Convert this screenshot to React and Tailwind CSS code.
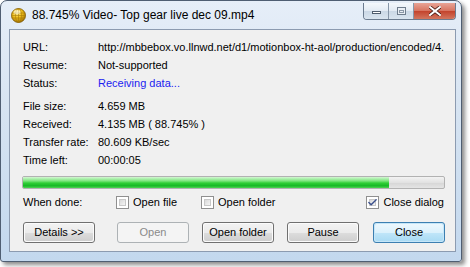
import { Check } from 'lucide-react'

const font = { fontFamily: '"Liberation Sans", Arial, sans-serif' }

function GlobeIcon() {
    return (
        <svg width="15" height="15" viewBox="0 0 15 15">
            <defs>
                <radialGradient id="gl" cx="0.4" cy="0.3" r="0.75">
                    <stop offset="0" stopColor="#fff6b0" />
                    <stop offset="0.45" stopColor="#f2c21b" />
                    <stop offset="1" stopColor="#9a6a00" />
                </radialGradient>
            </defs>
            <circle cx="7.5" cy="7.5" r="7" fill="url(#gl)" stroke="#7a5600" strokeWidth="0.8" />
            <ellipse cx="7.5" cy="7.5" rx="3" ry="7" fill="none" stroke="#a87a06" strokeWidth="0.6" />
            <line x1="7.5" y1="0.5" x2="7.5" y2="14.5" stroke="#a87a06" strokeWidth="0.6" />
            <line x1="0.8" y1="5" x2="14.2" y2="5" stroke="#a87a06" strokeWidth="0.6" />
            <line x1="0.5" y1="7.5" x2="14.5" y2="7.5" stroke="#a87a06" strokeWidth="0.6" />
            <line x1="0.8" y1="10" x2="14.2" y2="10" stroke="#a87a06" strokeWidth="0.6" />
            <ellipse cx="6" cy="4" rx="3.5" ry="2" fill="#fffbe0" opacity="0.55" />
        </svg>
    )
}

function CaptionButtons() {
    return (
        <div className="flex h-[17px] rounded-b-[4px] border border-t-0 border-[#6b7b8f] overflow-hidden">
            <div className="w-[25px] flex items-center justify-center border-r border-[#8796a8] bg-[linear-gradient(to_bottom,#f4f8fc_0%,#e2eaf3_50%,#cbd8e6_51%,#d9e4ef_100%)]">
                <div className="w-[9px] h-[3px] mt-[3px] border border-[#4f5d6e] bg-white"></div>
            </div>
            <div className="w-[25px] flex items-center justify-center border-r border-[#8796a8] bg-[linear-gradient(to_bottom,#f4f8fc_0%,#e2eaf3_50%,#cbd8e6_51%,#d9e4ef_100%)]">
                <div className="w-[9px] h-[8px] border border-[#6f7d8d] bg-[#e9eef4] flex items-center justify-center">
                    <div className="w-[5px] h-[3px] border border-[#8a97a6]"></div>
                </div>
            </div>
            <div className="w-[41px] flex items-center justify-center bg-[linear-gradient(to_bottom,#e8a496_0%,#d7735f_50%,#c3432c_51%,#d2765e_100%)]">
                <svg width="12" height="10" viewBox="0 0 12 10">
                    <path d="M1 1 L11 9 M11 1 L1 9" stroke="#4a1e16" strokeWidth="3.6" strokeLinecap="square" />
                    <path d="M1 1 L11 9 M11 1 L1 9" stroke="#ffffff" strokeWidth="2" strokeLinecap="square" />
                </svg>
            </div>
        </div>
    )
}

function Checkbox({ checked, label }) {
    return (
        <div className="flex items-center gap-[4px]">
            <div className="w-[13px] h-[13px] border border-[#8f8f8f] bg-white p-[2px]">
                <div className="w-full h-full bg-[linear-gradient(135deg,#d9d9d9,#f4f4f4)] border border-[#c8c8c8] relative">
                    {checked && (
                        <Check size={11} strokeWidth={3} className="absolute -left-[3px] -top-[3px] text-[#3b4f8c]" />
                    )}
                </div>
            </div>
            <span>{label}</span>
        </div>
    )
}

function Button({ children, variant }) {
    if (variant === 'disabled') {
        return (
            <div className="h-[21px] w-[72px] rounded-[3px] border border-[#adb2b5] bg-[#f4f4f4] text-[#8a8a8a] flex items-center justify-center">
                {children}
            </div>
        )
    }
    if (variant === 'default') {
        return (
            <div className="h-[21px] w-[72px] rounded-[3px] border border-[#3c7fb1] p-[1px] bg-[#c5e6f8]">
                <div className="h-full w-full rounded-[2px] flex items-center justify-center bg-[linear-gradient(to_bottom,#ecf7fd_0%,#dbf1fc_50%,#c0e6f9_51%,#aadbf4_100%)]">
                    {children}
                </div>
            </div>
        )
    }
    return (
        <div className="h-[21px] w-[72px] rounded-[3px] border border-[#707070] p-[1px] bg-[#fbfbfb]">
            <div className="h-full w-full rounded-[2px] flex items-center justify-center bg-[linear-gradient(to_bottom,#f2f2f2_0%,#ebebeb_50%,#dddddd_51%,#cfcfcf_100%)]">
                {children}
            </div>
        </div>
    )
}

export default function App() {
    const info = [
        { label: 'URL:', value: 'http://mbbebox.vo.llnwd.net/d1/motionbox-ht-aol/production/encoded/4.' },
        { label: 'Resume:', value: 'Not-supported' },
        { label: 'Status:', value: 'Receiving data...', blue: true },
    ]
    const stats = [
        { label: 'File size:', value: '4.659 MB' },
        { label: 'Received:', value: '4.135 MB ( 88.745% )' },
        { label: 'Transfer rate:', value: '80.609 KB/sec' },
        { label: 'Time left:', value: '00:00:05' },
    ]

    return (
        <div className="w-[470px] h-[267px] bg-white" style={font}>
            <div className="w-[462px] h-[262px] rounded-t-[7px] rounded-b-[3px] border border-[#4f5e72] flex flex-col bg-[linear-gradient(to_bottom,#e6eef8,#d7e4f2_40%,#c3d8ee)] shadow-[3px_3px_4px_rgba(0,0,0,0.45)]">
                <div className="h-[28px] flex items-start shrink-0">
                    <div className="ml-[10px] mt-[7px]">
                        <GlobeIcon />
                    </div>
                    <span className="ml-[6px] mt-[6px] text-[12px] text-black leading-[16px]">
                        88.745% Video- Top gear live dec 09.mp4
                    </span>
                    <div className="flex-1"></div>
                    <div className="mr-[5px] mt-[2px]">
                        <CaptionButtons />
                    </div>
                </div>

                <div className="ml-[8px] mr-[5px] mb-[9px] flex-1 border border-[#8c9bb0] bg-[#f0f0f0] pt-[8px] pl-[12px] pr-[10px] text-[11px] text-black">
                    <div className="flex flex-col">
                        {info.map((row) => (
                            <div key={row.label} className="h-[18px] flex items-center">
                                <span className="w-[76px] shrink-0 pl-[1px]">{row.label}</span>
                                <span className={`whitespace-nowrap ${row.blue ? 'text-[#1c1cf0]' : ''}`}>{row.value}</span>
                            </div>
                        ))}
                    </div>
                    <div className="flex flex-col mt-[5px]">
                        {stats.map((row) => (
                            <div key={row.label} className="h-[18px] flex items-center">
                                <span className="w-[76px] shrink-0 pl-[1px]">{row.label}</span>
                                <span className="whitespace-nowrap">{row.value}</span>
                            </div>
                        ))}
                    </div>

                    <div className="mt-[7px] h-[13px] rounded-[2px] border border-[#b2b2b2] bg-[linear-gradient(to_bottom,#f3f3f3,#e2e2e2_50%,#d6d6d6_51%,#e4e4e4)] overflow-hidden">
                        <div className="h-full w-[366px] bg-[linear-gradient(to_bottom,#d3f7d3_0%,#7fe680_35%,#2fcf36_55%,#16b826_80%,#4fd454_100%)]"></div>
                    </div>

                    <div className="mt-[4px] h-[18px] flex items-center">
                        <span className="w-[94px] shrink-0 pl-[1px]">When done:</span>
                        <div className="w-[85px] shrink-0">
                            <Checkbox label="Open file" />
                        </div>
                        <Checkbox label="Open folder" />
                        <div className="flex-1"></div>
                        <div className="mr-[1px]">
                            <Checkbox checked label="Close dialog" />
                        </div>
                    </div>

                    <div className="mt-[11px] flex items-center pl-[1px]">
                        <Button>Details &gt;&gt;</Button>
                        <div className="ml-[22px]">
                            <Button variant="disabled">Open</Button>
                        </div>
                        <div className="ml-[13px]">
                            <Button>Open folder</Button>
                        </div>
                        <div className="ml-[13px]">
                            <Button>Pause</Button>
                        </div>
                        <div className="ml-[14px]">
                            <Button variant="default">Close</Button>
                        </div>
                    </div>
                </div>
            </div>
        </div>
    )
}
